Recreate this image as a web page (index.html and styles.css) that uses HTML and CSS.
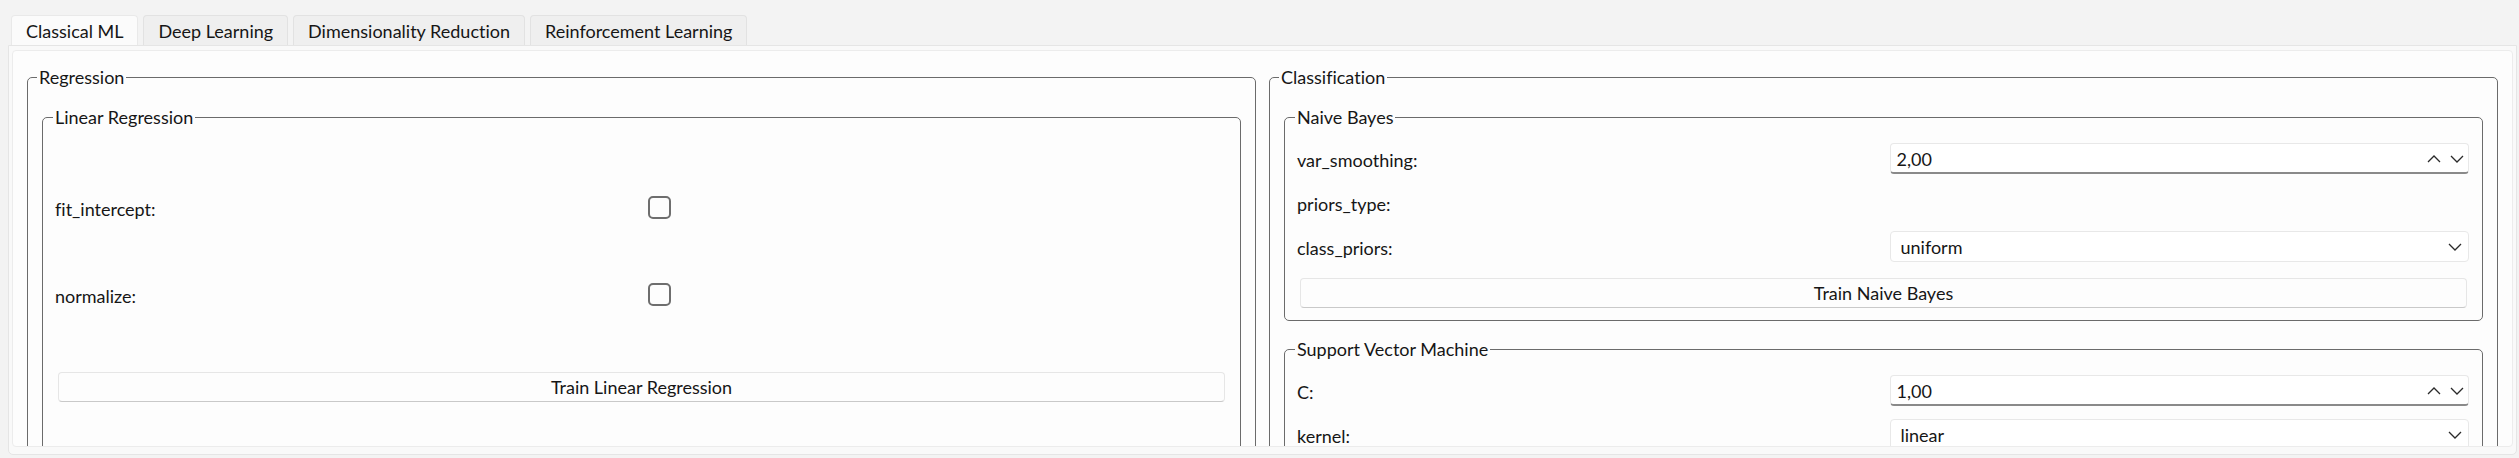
FILE: index.html
```html
<!DOCTYPE html>
<html lang="en">
<head>
<meta charset="utf-8">
<title>ML Toolkit</title>
<link rel="stylesheet" href="styles.css">
</head>
<body>
<div class="app">
  <div class="tabbar">
    <div class="tab active">Classical ML</div>
    <div class="tab">Deep Learning</div>
    <div class="tab">Dimensionality Reduction</div>
    <div class="tab">Reinforcement Learning</div>
  </div>
  <div class="pane">
    <div class="panel">
      <div class="columns">
        <fieldset class="group">
          <legend>Regression</legend>
          <fieldset class="sub linear">
            <legend>Linear Regression</legend>
            <div class="form form-linear">
              <span class="label">fit_intercept:</span><span class="field"><span class="check"></span></span>
              <span class="label">normalize:</span><span class="field"><span class="check"></span></span>
            </div>
            <button class="btn btn-linear">Train Linear Regression</button>
          </fieldset>
        </fieldset>
        <fieldset class="group">
          <legend>Classification</legend>
          <fieldset class="sub nb">
            <legend>Naive Bayes</legend>
            <div class="form">
              <span class="label">var_smoothing:</span>
              <span class="spin"><span class="val">2,00</span>
                <svg class="chev" width="14" height="8" viewBox="0 0 14 8"><polyline points="1,7 7,1 13,7"/></svg>
                <svg class="chev" width="14" height="8" viewBox="0 0 14 8"><polyline points="1,1 7,7 13,1"/></svg>
              </span>
              <span class="label">priors_type:</span><span class="field"></span>
              <span class="label">class_priors:</span>
              <span class="combo"><span class="val">uniform</span>
                <svg class="chev" width="14" height="8" viewBox="0 0 14 8"><polyline points="1,1 7,7 13,1"/></svg>
              </span>
            </div>
            <button class="btn">Train Naive Bayes</button>
          </fieldset>
          <fieldset class="sub svm">
            <legend>Support Vector Machine</legend>
            <div class="form">
              <span class="label">C:</span>
              <span class="spin"><span class="val">1,00</span>
                <svg class="chev" width="14" height="8" viewBox="0 0 14 8"><polyline points="1,7 7,1 13,7"/></svg>
                <svg class="chev" width="14" height="8" viewBox="0 0 14 8"><polyline points="1,1 7,7 13,1"/></svg>
              </span>
              <span class="label">kernel:</span>
              <span class="combo"><span class="val">linear</span>
                <svg class="chev" width="14" height="8" viewBox="0 0 14 8"><polyline points="1,1 7,7 13,1"/></svg>
              </span>
            </div>
          </fieldset>
        </fieldset>
      </div>
    </div>
  </div>
</div>
</body>
</html>
```
FILE: styles.css
```css
html, body {
  margin: 0;
  padding: 0;
}
body {
  width: 2519px;
  height: 458px;
  overflow: hidden;
  background: #f3f3f3;
  font-family: Lato, "Liberation Sans", sans-serif;
  font-size: 18px;
  font-variant-ligatures: none;
  color: #161616;
}
.tabbar {
  display: flex;
  gap: 5px;
  padding: 15px 0 0 11px;
  height: 30px;
}
.tab {
  box-sizing: border-box;
  height: 30px;
  padding: 0 14px;
  line-height: 30px;
  border: 1px solid #e2e2e2;
  border-bottom: none;
  border-radius: 4px 4px 0 0;
  background: #efefef;
}
.tab.active {
  background: #fbfbfb;
  border-color: #e9e9e9;
}
.pane {
  box-sizing: border-box;
  height: 410px;
  margin: 0 2px 0 8px;
  border: 1px solid #e5e5e5;
  border-radius: 0 0 5px 5px;
  background: #f9f9f9;
  padding: 4px 3px 7px 3px;
}
.panel {
  box-sizing: border-box;
  height: 100%;
  background: #fdfdfd;
  border: 1px solid #ececec;
  border-radius: 4px;
  overflow: hidden;
  padding: 15px 14px 0 14px;
}
.columns {
  display: flex;
  gap: 13px;
  align-items: stretch;
}
fieldset {
  margin: 0;
  min-width: 0;
  border: 1px solid #6b6b6b;
  border-radius: 5px;
}
legend {
  padding: 0 2px;
  line-height: 22px;
}
.group {
  flex: 1;
  min-height: 410px;
  padding: 18px 14px 0 14px;
}
.group > legend {
  margin-left: -5px;
}
.sub {
  padding: 15px 13px 12px 12px;
}
.sub > legend {
  margin-left: -2px;
}
.linear {
  min-height: 380px;
  padding-top: 64px;
}
.svm {
  margin-top: 17px;
  min-height: 150px;
}
.form {
  display: grid;
  grid-template-columns: 1fr 1fr;
  column-gap: 13px;
  row-gap: 13px;
  grid-auto-rows: 31px;
  align-items: center;
}
.form-linear {
  row-gap: 56px;
}
.label {
  padding-top: 2px;
}
.field {
  display: flex;
  align-items: center;
}
.check {
  box-sizing: border-box;
  width: 23px;
  height: 23px;
  border: 2px solid #6e6e6e;
  border-radius: 5px;
  background: #fdfdfd;
}
.spin, .combo {
  box-sizing: border-box;
  height: 31px;
  display: flex;
  align-items: center;
  gap: 9px;
  border: 1px solid #e8e8e8;
  border-radius: 4px;
  background: #ffffff;
}
.spin {
  border-bottom: 2px solid #8a8a8a;
  padding: 1px 4px 0 6px;
}
.combo {
  padding: 0 6px 0 10px;
}
.val {
  flex: 1;
}
.chev {
  display: block;
  fill: none;
  stroke: #2a2a2a;
  stroke-width: 1.3;
}
.btn {
  display: block;
  box-sizing: border-box;
  height: 30px;
  width: calc(100% - 5px);
  margin: 16px 2px 0 3px;
  padding: 0;
  border: 1px solid #e6e6e6;
  border-bottom-color: #c9c9c9;
  border-radius: 4px;
  background: #fdfdfd;
  font: inherit;
  font-variant-ligatures: none;
  color: inherit;
}
.btn-linear {
  margin-top: 62px;
}
```
